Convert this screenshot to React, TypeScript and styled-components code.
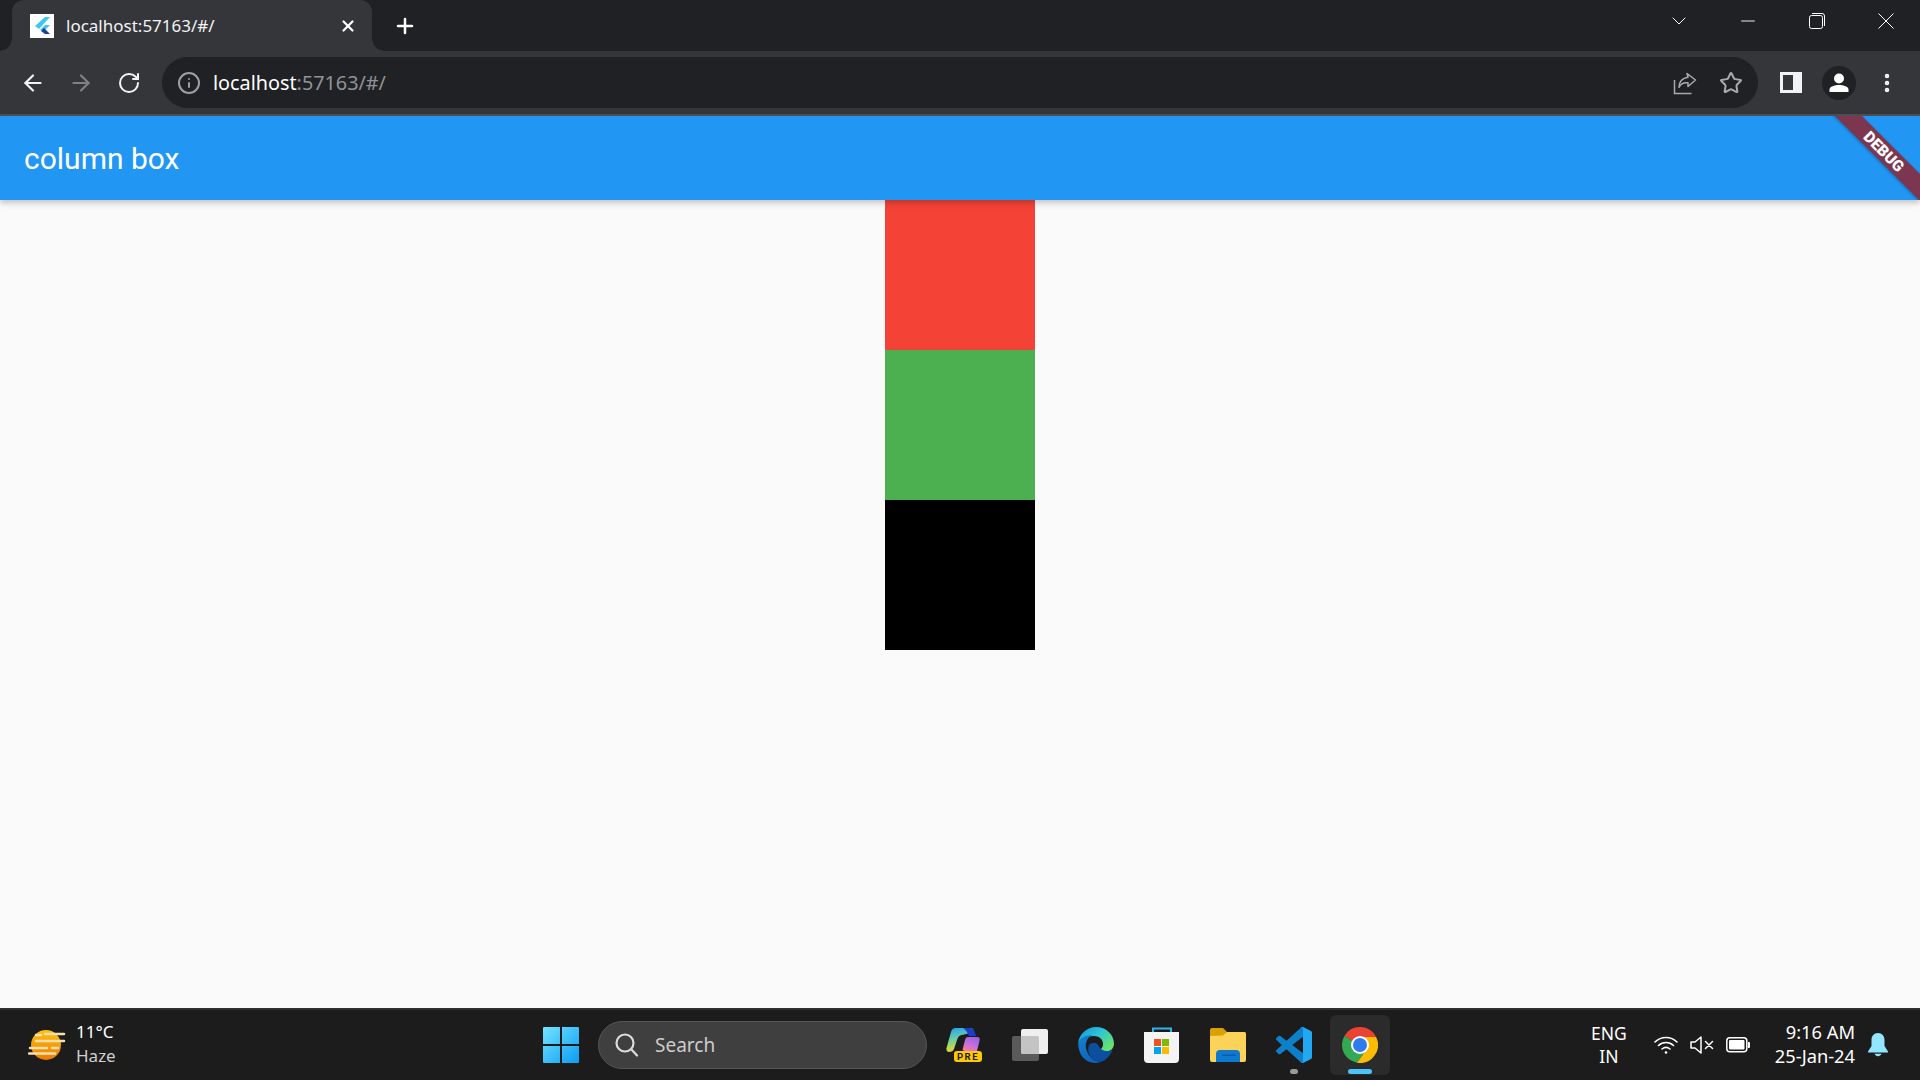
import styled, { createGlobalStyle } from "styled-components";
import { ArrowLeft, ArrowRight, RotateCw, Info, Star, X, Plus, ChevronDown, Minus, MoreVertical } from "lucide-react";

const GlobalStyle = createGlobalStyle`
  html, body {
    margin: 0;
    padding: 0;
    height: 100%;
    overflow: hidden;
    background: #fafafa;
  }
  * {
    box-sizing: border-box;
  }
`;

const Page = styled.div`
  display: flex;
  flex-direction: column;
  height: 100vh;
  width: 100vw;
  overflow: hidden;
  font-family: "Noto Sans", "Open Sans", sans-serif;
`;

const TabStrip = styled.div`
  display: flex;
  align-items: center;
  height: 51px;
  padding-left: 12px;
  background: #202124;
  color: #fff;
`;

const Tab = styled.div`
  position: relative;
  display: flex;
  align-items: center;
  width: 360px;
  height: 51px;
  padding: 0 15px 0 18px;
  background: #35363a;
  border-radius: 12px 12px 0 0;

  &::before,
  &::after {
    content: "";
    position: absolute;
    bottom: 0;
    width: 12px;
    height: 12px;
  }
  &::before {
    left: -12px;
    background: radial-gradient(circle at 0 0, transparent 11.5px, #35363a 12px);
  }
  &::after {
    right: -12px;
    background: radial-gradient(circle at 100% 0, transparent 11.5px, #35363a 12px);
  }
`;

const Favicon = styled.div`
  display: flex;
  flex: none;
  width: 24px;
  height: 24px;
  margin-right: 12px;
  background: #fff;
`;

const TabTitle = styled.span`
  flex: 1;
  font-size: 17px;
  color: #f1f3f4;
  white-space: nowrap;
`;

const NewTab = styled.div`
  display: flex;
  align-items: center;
  justify-content: center;
  width: 30px;
  margin-left: 18px;
`;

const WindowControls = styled.div`
  display: flex;
  margin-left: auto;
  align-self: flex-start;
`;

const WindowButton = styled.div`
  display: flex;
  align-items: center;
  justify-content: center;
  width: 69px;
  height: 42px;
`;

const Toolbar = styled.div`
  display: flex;
  align-items: center;
  gap: 9px;
  height: 65px;
  padding: 6px 9px;
  background: #35363a;
  border-bottom: 2px solid #4f5053;
`;

const NavGroup = styled.div`
  display: flex;
  align-items: center;
`;

const ToolButton = styled.div<{ $dim?: boolean }>`
  display: flex;
  align-items: center;
  justify-content: center;
  width: 48px;
  height: 48px;
  color: ${(p) => (p.$dim ? "#7f8184" : "#f1f3f4")};
`;

const AddressBar = styled.div`
  flex: 1;
  display: flex;
  align-items: center;
  height: 51px;
  padding: 0 4px 0 15px;
  background: #202124;
  border-radius: 26px;
`;

const SiteInfo = styled.div`
  display: flex;
  color: #9aa0a6;
  margin-right: 12px;
`;

const Url = styled.span`
  flex: 1;
  font-size: 19.8px;
  color: #8f9398;
  white-space: nowrap;

  b {
    font-weight: 400;
    color: #fff;
  }
`;

const BarAction = styled.div`
  display: flex;
  align-items: center;
  justify-content: center;
  width: 46px;
  height: 46px;
  color: #a8abae;
`;

const AppBar = styled.header`
  position: relative;
  z-index: 1;
  display: flex;
  align-items: center;
  flex: none;
  height: 84px;
  padding-left: 24px;
  background: #2196f3;
  box-shadow: 0 3px 6px rgba(0, 0, 0, 0.22);
`;

const AppTitle = styled.h1`
  margin: 0;
  font-family: Roboto, sans-serif;
  font-size: 30px;
  font-weight: 400;
  color: #fff;
`;

const BannerCorner = styled.div`
  position: absolute;
  top: 0;
  right: 0;
  width: 90px;
  height: 84px;
  overflow: hidden;
`;

const Ribbon = styled.div`
  position: absolute;
  top: 26px;
  right: -34px;
  width: 140px;
  height: 19px;
  display: flex;
  align-items: center;
  justify-content: center;
  transform: rotate(45deg);
  background: #7d3650;
  box-shadow: 0 1px 3px rgba(0, 0, 0, 0.3);
  font-family: Roboto, sans-serif;
  font-size: 15.5px;
  font-weight: 900;
  color: #fff;
`;

const Body = styled.main`
  flex: 1;
  display: flex;
  flex-direction: column;
  align-items: center;
  background: #fafafa;
`;

const Square = styled.div<{ $color: string }>`
  flex: none;
  width: 150px;
  height: 150px;
  background: ${(p) => p.$color};
`;

const Taskbar = styled.footer`
  display: flex;
  align-items: center;
  flex: none;
  height: 72px;
  background: #1c1c1c;
  border-top: 2px solid #2f2f2f;
  color: #fff;
`;

const Weather = styled.div`
  display: flex;
  align-items: center;
  flex: none;
  width: 531px;
  padding-left: 28px;
`;

const WeatherText = styled.div`
  display: flex;
  flex-direction: column;
  margin-left: 10px;
  padding-bottom: 3px;
  font-size: 17px;
  line-height: 24px;

  span + span {
    color: #cfcfcf;
  }
`;

const TaskCell = styled.div<{ $active?: boolean }>`
  position: relative;
  display: flex;
  align-items: center;
  justify-content: center;
  flex: none;
  width: 60px;
  height: 60px;
  border-radius: 6px;
  background: ${(p) => (p.$active ? "#2b2b2b" : "transparent")};
`;

const RunDot = styled.span<{ $active?: boolean }>`
  position: absolute;
  bottom: 1px;
  left: 50%;
  transform: translateX(-50%);
  width: ${(p) => (p.$active ? "24px" : "8px")};
  height: 5px;
  border-radius: 3px;
  background: ${(p) => (p.$active ? "#4cc2ff" : "#9a9a9a")};
`;

const TaskIcons = styled.div`
  display: flex;
  align-items: center;
  gap: 6px;
  margin-left: 7px;
`;

const SearchBox = styled.div`
  display: flex;
  align-items: center;
  flex: none;
  width: 329px;
  height: 48px;
  margin-left: 7px;
  padding-left: 16px;
  background: #3f3f3f;
  border: 1.5px solid #555;
  border-radius: 24px;
  font-size: 19px;
  color: #cdcdcd;

  svg {
    margin-right: 16px;
  }
`;

const Tray = styled.div`
  display: flex;
  align-items: center;
  margin-left: auto;
  padding-right: 32px;
`;

const Lang = styled.div`
  display: flex;
  flex-direction: column;
  align-items: center;
  width: 40px;
  margin-right: 25px;
  font-size: 17.5px;
  line-height: 23px;
`;

const TrayIcons = styled.div`
  display: flex;
  align-items: center;
  gap: 12px;
  margin-right: 25px;
`;

const Clock = styled.div`
  display: flex;
  flex-direction: column;
  align-items: flex-end;
  margin-right: 13px;
  padding-bottom: 2px;
  font-size: 18.3px;
  line-height: 24px;
`;

const FlutterMark = () => (
  <svg width="24" height="24" viewBox="0 0 24 24">
    <path d="M5 12 15 3h5l-11 12z" fill="#3fc5f2" />
    <path d="M10 16l5-5h5l-6 6z" fill="#3fc5f2" />
    <path d="M11 17l3-3 6 6h-5z" fill="#1a3f9e" />
  </svg>
);

const ShareIcon = () => (
  <svg width="24" height="24" viewBox="0 0 24 24" fill="none" stroke="currentColor" strokeWidth="1.5">
    <path d="M1.500 9v13.500h17" />
    <path d="M14 2.500 22.500 9 15 15.500v-3.700c-4-.6-7 .5-9 4.500 0-6 3-9 9-10z" strokeLinejoin="round" />
  </svg>
);

const SidePanelIcon = () => (
  <svg width="22" height="21" viewBox="0 0 22 21">
    <rect width="22" height="21" fill="#f1f3f4" />
    <rect x="3" y="3" width="10" height="15" fill="#35363a" />
  </svg>
);

const AvatarIcon = () => (
  <svg width="34" height="34" viewBox="0 0 34 34">
    <circle cx="17" cy="17" r="17" fill="#202124" />
    <circle cx="17" cy="12.500" r="5" fill="#fff" />
    <path d="M7.500 26v-2.500c0-3 5-4.500 9.500-4.500s9.500 1.500 9.500 4.500V26z" fill="#fff" />
  </svg>
);

const WeatherIcon = () => (
  <svg width="38" height="34" viewBox="0 0 38 34">
    <defs>
      <linearGradient id="sun" x1="0" y1="0" x2="0" y2="1">
        <stop offset="0" stopColor="#fdc20e" />
        <stop offset="1" stopColor="#ee7a05" />
      </linearGradient>
    </defs>
    <circle cx="18" cy="17" r="15" fill="url(#sun)" />
    <g stroke="#f5e0ae" strokeWidth="2.500" strokeLinecap="round">
      <path d="M17 6h19M8 7h5M8 13h28M2 20h17M24 20h6M1 25.500h26" />
    </g>
  </svg>
);

const WindowsIcon = () => (
  <svg width="36" height="36" viewBox="0 0 36 36">
    <defs>
      <linearGradient id="win" x1="0" y1="0" x2="1" y2="1">
        <stop offset="0" stopColor="#74e4ff" />
        <stop offset="1" stopColor="#0a9cf5" />
      </linearGradient>
    </defs>
    <path d="M1 0h16v17H0V1a1 1 0 0 1 1-1zM19 0h16a1 1 0 0 1 1 1v16H19zM0 19h17v17H1a1 1 0 0 1-1-1zM19 19h17v16a1 1 0 0 1-1 1H19z" fill="url(#win)" />
  </svg>
);

const SearchIcon = () => (
  <svg width="24" height="24" viewBox="0 0 24 24" fill="none" stroke="#dcdcdc" strokeWidth="2.200">
    <circle cx="10" cy="10" r="8.500" />
    <path d="M16.500 16.500 22 22.500" strokeLinecap="round" />
  </svg>
);

const CopilotIcon = () => (
  <svg width="36" height="36" viewBox="0 0 36 36">
    <defs>
      <linearGradient id="copL" x1="0.300" y1="0" x2="0.500" y2="1">
        <stop offset="0" stopColor="#2aa5ee" />
        <stop offset="0.45" stopColor="#6fd0a0" />
        <stop offset="0.8" stopColor="#c8d84a" />
        <stop offset="1" stopColor="#f4c430" />
      </linearGradient>
      <linearGradient id="copR" x1="0.800" y1="0" x2="0.300" y2="1">
        <stop offset="0" stopColor="#9a5fe6" />
        <stop offset="0.6" stopColor="#c86fdc" />
        <stop offset="1" stopColor="#f27ba8" />
      </linearGradient>
    </defs>
    <path d="M10 1h14c3 0 4 2 4 4L16 8c-3 .5-4 2-5 5l-3 9c-1 2-2 3-5 3H3c-2 0-3-2-2.500-4L5 5c1-3 2-4 5-4z" fill="url(#copL)" />
    <path d="M17 1h7c3 0 5 3 6 8h-7c-2-4-3-6-6-8z" fill="#1a3fc4" />
    <path d="M22 10h9c3 0 3 2 2.500 4L31 24H19c-2 0-3-1-2-3l2-8c.5-2 1.500-3 3-3z" fill="url(#copR)" />
    <rect x="8" y="24" width="28" height="11" rx="3" fill="#ffc800" />
    <text x="22" y="33" textAnchor="middle" fontFamily="Roboto, sans-serif" fontSize="9.500" fontWeight="700" letterSpacing="1.500" fill="#1c1c1c">PRE</text>
  </svg>
);

const TaskViewIcon = () => (
  <svg width="36" height="36" viewBox="0 0 36 36">
    <rect x="0" y="9" width="27" height="25" rx="2" fill="#5a5a5a" />
    <rect x="9" y="2" width="27" height="25" rx="2" fill="#efefef" />
    <path d="M9 9h16a2 2 0 0 1 2 2v16H11a2 2 0 0 1-2-2z" fill="#c4c4c4" />
  </svg>
);

const EdgeIcon = () => (
  <svg width="36" height="36" viewBox="0 0 36 36">
    <defs>
      <linearGradient id="edgeTop" x1="0" y1="0" x2="1" y2="0.700">
        <stop offset="0" stopColor="#1491d8" />
        <stop offset="0.5" stopColor="#2cc4d8" />
        <stop offset="1" stopColor="#6ae36a" />
      </linearGradient>
      <linearGradient id="edgeLow" x1="0" y1="0" x2="0.600" y2="1">
        <stop offset="0" stopColor="#1383d2" />
        <stop offset="1" stopColor="#0f62b8" />
      </linearGradient>
    </defs>
    <path d="M.200 16C1 7 9 0 18 0c10 0 18 7.500 18 16.500 0 5-3.500 8-8 8-3 0-5-1-5-2 0-1 2-2 2-5.500C25 12 21 9 16 9 8 9 1.500 13 .200 16z" fill="url(#edgeTop)" />
    <path d="M.200 16C1.500 11 8 8 14 8c-5 3-7 8-6 13 1 6 6 13 14 14-1.500.6-3 1-5 1C7 36 0 27 .200 16z" fill="url(#edgeLow)" />
    <path d="M11 18c3-3 7-3 9 0 1 2 4 6 8 6 2.500 0 5-.5 6.500-1.500C32 30 26 35 22 35 14 34 8 27 11 18z" fill="#0b4f9e" />
  </svg>
);

const StoreIcon = () => (
  <svg width="36" height="36" viewBox="0 0 36 36">
    <path d="M9 6V1.500h18V6" fill="none" stroke="#2bb4ee" strokeWidth="2" />
    <path d="M0 5h35v27a4 4 0 0 1-4 4H4a4 4 0 0 1-4-4z" fill="#f4f4f4" />
    <rect x="10" y="12" width="7" height="7" fill="#f25022" />
    <rect x="18" y="12" width="7" height="7" fill="#7fba00" />
    <rect x="10" y="20" width="7" height="7" fill="#00a4ef" />
    <rect x="18" y="20" width="7" height="7" fill="#ffb900" />
  </svg>
);

const FolderIcon = () => (
  <svg width="36" height="36" viewBox="0 0 36 36">
    <path d="M0 3a2 2 0 0 1 2-2h11l4 4h17a2 2 0 0 1 2 2v6H0z" fill="#d9a106" />
    <path d="M0 9l13-.500L17 5h17a2 2 0 0 1 2 2v26a2 2 0 0 1-2 2H2a2 2 0 0 1-2-2z" fill="#fcd258" />
    <path d="M6 35V27a4 4 0 0 1 4-4h16a4 4 0 0 1 4 4v8z" fill="#0f79cf" />
    <rect x="12" y="27.500" width="14" height="1.500" fill="#0a5aa5" />
  </svg>
);

const VsCodeIcon = () => (
  <svg width="36" height="36" viewBox="0 0 24 24">
    <path
      d="M23.150 2.587 18.210.21a1.494 1.494 0 0 0-1.705.29l-9.460 8.630-4.120-3.128a.999.999 0 0 0-1.276.057L.327 7.261A1 1 0 0 0 .326 8.740L3.899 12 .326 15.260a1 1 0 0 0 .001 1.479L1.650 17.940a.999.999 0 0 0 1.276.057l4.120-3.128 9.460 8.630a1.492 1.492 0 0 0 1.704.29l4.942-2.377A1.500 1.500 0 0 0 24 20.060V3.939a1.500 1.500 0 0 0-.85-1.352zm-5.146 14.861L10.826 12l7.178-5.448v10.896z"
      fill="#0e80ca"
    />
    <path d="M16.500.5a1.490 1.490 0 0 1 1.710-.29l4.940 2.377A1.500 1.500 0 0 1 24 3.939V20.060a1.500 1.500 0 0 1-.85 1.352l-4.940 2.377a1.490 1.490 0 0 1-1.710-.29c.6.500 1.500.1 1.500-.7V1.200c0-.8-.9-1.200-1.500-.7z" fill="#22a7f2" />
  </svg>
);

const ChromeIcon = () => (
  <svg width="36" height="36" viewBox="0 0 36 36">
    <path d="M18 18 18 10 34.100 10A18 18 0 0 0 2.400 9L11 14Z" fill="#ea4335" />
    <path d="M18 18 11 14 2.400 9A18 18 0 0 0 15 35.750L25 22Z" fill="#34a853" />
    <path d="M18 18 18 10 34.100 10A18 18 0 0 1 15 35.750L25 22Z" fill="#fbbc04" />
    <circle cx="18" cy="18" r="9" fill="#fff" />
    <circle cx="18" cy="18" r="7" fill="#2f7bee" />
  </svg>
);

const WifiIcon = () => (
  <svg width="24" height="20" viewBox="0 0 24 20" fill="none" stroke="#fff" strokeWidth="1.600" strokeLinecap="round">
    <path d="M1 7c6-6 16-6 22 0M4.500 10.500c4-4 11-4 15 0M8 14c2.500-2 5.500-2 8 0" />
    <circle cx="12" cy="17.500" r="1.300" fill="#fff" stroke="none" />
  </svg>
);

const MuteIcon = () => (
  <svg width="24" height="20" viewBox="0 0 24 20" fill="none" stroke="#fff" strokeWidth="1.500" strokeLinejoin="round">
    <path d="M1 7v6h4l6 5V2L5 7z" />
    <path d="M15.500 6.500l7 7M22.500 6.500l-7 7" strokeLinecap="round" />
  </svg>
);

const BatteryIcon = () => (
  <svg width="24" height="16" viewBox="0 0 24 16">
    <rect x="0.800" y="0.800" width="20" height="14" rx="3" fill="none" stroke="#fff" strokeWidth="1.500" />
    <rect x="3" y="3" width="15.500" height="9.500" rx="1" fill="#fff" />
    <path d="M22 5h1a1 1 0 0 1 1 1v4a1 1 0 0 1-1 1h-1z" fill="#fff" />
  </svg>
);

const BellIcon = () => (
  <svg width="20" height="24" viewBox="0 0 20 24" fill="#92e6ff">
    <path d="M10 0c-4 0-6.500 3-6.500 7v6L0 18.500c-.3.600 0 1 .7 1h18.600c.7 0 1-.4.700-1L16.500 13V7c0-4-2.500-7-6.500-7z" />
    <path d="M6.500 20.700h7c-.6 1.600-2 2.500-3.500 2.500s-2.900-.9-3.500-2.500z" />
  </svg>
);

export default function App() {
  return (
    <Page>
      <GlobalStyle />
      <TabStrip>
        <Tab>
          <Favicon>
            <FlutterMark />
          </Favicon>
          <TabTitle>localhost:57163/#/</TabTitle>
          <X size={18} strokeWidth={3} />
        </Tab>
        <NewTab>
          <Plus size={24} strokeWidth={2.5} />
        </NewTab>
        <WindowControls>
          <WindowButton>
            <ChevronDown size={24} strokeWidth={1} />
          </WindowButton>
          <WindowButton>
            <Minus size={22} strokeWidth={1} />
          </WindowButton>
          <WindowButton>
            <svg width="16" height="16" viewBox="0 0 16 16" fill="none" stroke="#fff">
              <rect x="0.500" y="2.500" width="13" height="13" rx="2" />
              <path d="M3 .5h10a2.500 2.500 0 0 1 2.500 2.500v10" />
            </svg>
          </WindowButton>
          <WindowButton>
            <svg width="16" height="16" viewBox="0 0 16 16" stroke="#fff">
              <path d="M.5.5l15 15M15.500.5l-15 15" />
            </svg>
          </WindowButton>
        </WindowControls>
      </TabStrip>
      <Toolbar>
        <NavGroup>
          <ToolButton>
            <ArrowLeft size={26} strokeWidth={2} />
          </ToolButton>
          <ToolButton $dim>
            <ArrowRight size={26} strokeWidth={2} />
          </ToolButton>
          <ToolButton>
            <RotateCw size={24} strokeWidth={2} />
          </ToolButton>
        </NavGroup>
        <AddressBar>
          <SiteInfo>
            <Info size={24} strokeWidth={2} />
          </SiteInfo>
          <Url>
            <b>localhost</b>:57163/#/
          </Url>
          <BarAction>
            <ShareIcon />
          </BarAction>
          <BarAction>
            <Star size={24} strokeWidth={2} />
          </BarAction>
        </AddressBar>
        <NavGroup>
          <ToolButton>
            <SidePanelIcon />
          </ToolButton>
          <ToolButton>
            <AvatarIcon />
          </ToolButton>
          <ToolButton>
            <MoreVertical size={24} strokeWidth={2.5} />
          </ToolButton>
        </NavGroup>
      </Toolbar>
      <AppBar>
        <AppTitle>column box</AppTitle>
        <BannerCorner>
          <Ribbon>DEBUG</Ribbon>
        </BannerCorner>
      </AppBar>
      <Body>
        <Square $color="#f44336" />
        <Square $color="#4caf50" />
        <Square $color="#000000" />
      </Body>
      <Taskbar>
        <Weather>
          <WeatherIcon />
          <WeatherText>
            <span>11°C</span>
            <span>Haze</span>
          </WeatherText>
        </Weather>
        <TaskCell>
          <WindowsIcon />
        </TaskCell>
        <SearchBox>
          <SearchIcon />
          Search
        </SearchBox>
        <TaskIcons>
          <TaskCell>
            <CopilotIcon />
          </TaskCell>
          <TaskCell>
            <TaskViewIcon />
          </TaskCell>
          <TaskCell>
            <EdgeIcon />
          </TaskCell>
          <TaskCell>
            <StoreIcon />
          </TaskCell>
          <TaskCell>
            <FolderIcon />
          </TaskCell>
          <TaskCell>
            <VsCodeIcon />
            <RunDot />
          </TaskCell>
          <TaskCell $active>
            <ChromeIcon />
            <RunDot $active />
          </TaskCell>
        </TaskIcons>
        <Tray>
          <Lang>
            <span>ENG</span>
            <span>IN</span>
          </Lang>
          <TrayIcons>
            <WifiIcon />
            <MuteIcon />
            <BatteryIcon />
          </TrayIcons>
          <Clock>
            <span>9:16 AM</span>
            <span>25-Jan-24</span>
          </Clock>
          <BellIcon />
        </Tray>
      </Taskbar>
    </Page>
  );
}
